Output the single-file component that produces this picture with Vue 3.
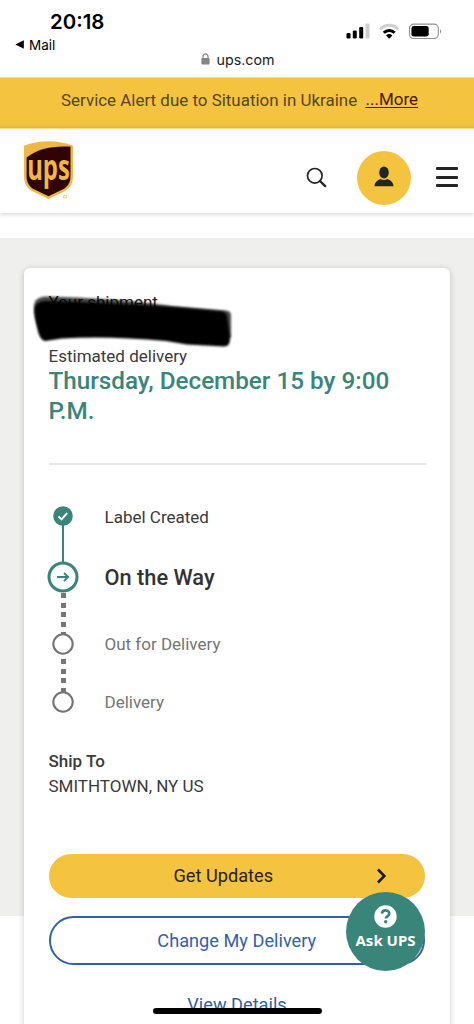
<script setup>
const steps = [
  { label: 'Label Created', state: 'done' },
  { label: 'On the Way', state: 'current' },
  { label: 'Out for Delivery', state: 'todo out' },
  { label: 'Delivery', state: 'todo last' },
]
</script>

<template>
  <div class="screen">
    <div class="status">
      <div class="clock">20:18</div>
      <div class="back">
        <svg width="10" height="10" viewBox="0 0 10 10"><path d="M0.3 4.5 8.8 .3v8.4z" /></svg>
        <span>Mail</span>
      </div>
      <div class="indicators">
        <svg width="98" height="20" viewBox="0 0 98 20">
          <rect x=".5" y="13" width="4" height="5.5" rx="1.2" />
          <rect x="6.8" y="10.5" width="4" height="8" rx="1.2" />
          <rect x="13.2" y="7" width="4" height="11.5" rx="1.2" />
          <rect x="19.5" y="3.500" width="4" height="15" rx="1.2" fill="#cfcfcf" />
          <path d="M34.200 9.2A12.2 12.2 0 0 1 52.2 9.2" fill="none" stroke="#cfcfcf" stroke-width="2.8" />
          <path d="M37.800 12.7A7.6 7.6 0 0 1 48.6 12.7" fill="none" stroke="#000" stroke-width="3" />
          <path d="M40 15.500A4.7 4.7 0 0 1 46.4 15.500L43.2 18.7z" />
          <rect x="63.500" y="4.100" width="28.8" height="14.4" rx="4.3" fill="#fff" stroke="#8f8f8f" stroke-width="1.1" />
          <rect x="65.400" y="6" width="17.3" height="10.6" rx="2.4" />
          <path d="M94 8.900Q96.6 11.300 94 13.700z" fill="#999" />
        </svg>
      </div>
      <div class="address">
        <svg width="9" height="12" viewBox="0 0 9 12">
          <rect x=".4" y="5" width="8.2" height="6.6" rx="1" fill="#858585" />
          <path d="M2 5.5V3.4a2.5 2.5 0 0 1 5 0v2.1" fill="none" stroke="#858585" stroke-width="1.2" />
        </svg>
        <span>ups.com</span>
      </div>
    </div>

    <div class="alert"><span class="msg">Service Alert due to Situation in Ukraine</span><a class="more">...More</a></div>

    <header class="top">
      <svg class="logo" width="50" height="60" viewBox="0 0 50 60">
        <path d="M0 4.8C14-1.4 35-1.4 49 4.8V35c0 8-3.5 12.5-9 15.6L24.5 58 9 50.6C3.500 47.500 0 43 0 35z" fill="#eeb843" />
        <path d="M2.600 16.500C13 8 28 4.400 46.500 5.600V35c0 6.500-2.500 10.400-7.500 13.300L24.500 55.200 10 48.300C5 45.400 2.600 41.500 2.600 35z" fill="#300406" />
        <text x="3.200" y="38.800" textLength="42.600" lengthAdjust="spacingAndGlyphs" class="wordmark">ups</text>
        <circle cx="41" cy="55.800" r="1.500" fill="none" stroke="#f2cd7b" stroke-width="1.100" />
      </svg>
      <svg class="search" width="22" height="22" viewBox="0 0 22 22">
        <circle cx="8.800" cy="8.800" r="7.300" fill="none" stroke="#242424" stroke-width="1.700" />
        <path d="M14 14l5.200 5.100" stroke="#242424" stroke-width="2.400" stroke-linecap="round" />
      </svg>
      <div class="avatar">
        <svg width="20" height="21" viewBox="0 0 20 21" fill="#242424">
          <ellipse cx="10" cy="6.500" rx="4.800" ry="6" />
          <path d="M.4 20.300C.8 16.500 3.500 14 6.600 13.100Q10 15 13.400 13.100C16.500 14 19.200 16.500 19.600 20.300z" />
        </svg>
      </div>
      <div class="burger"><i></i><i></i><i></i></div>
    </header>

    <main class="page">
      <section class="card">
        <div class="shipment">
          <span>Your shipment</span>
          <svg class="scribble" width="204" height="60" viewBox="0 0 204 60">
            <defs><filter id="soft" x="-5%" y="-10%" width="110%" height="120%"><feGaussianBlur stdDeviation="1.100" /></filter></defs>
            <path filter="url(#soft)" opacity=".72" d="M4 7Q8 3.500 14 3.500L45 4.500Q80 6 117 10L140 13 194 17.500Q199 18 199 22L199 45L10 40C4 31-1 14 4 7z" />
            <path filter="url(#soft)" d="M4 12Q8 8 14 8L45 9Q80 10 117 12.500L140 14 190 18.500Q194 19 195 23L198 46Q198 53.500 192 53.500L155 51.500 134 48Q75 42.500 30 45.500L13 48Q9 47 7 41.500C4 31 1 16 4 12z" />
          </svg>
        </div>
        <div class="label">Estimated delivery</div>
        <h1>Thursday, December 15 by 9:00 P.M.</h1>
        <hr />
        <ol class="steps">
          <li v-for="s in steps" :key="s.label" :class="s.state">
            <div class="marker">
              <svg v-if="s.state === 'done'" width="20" height="20" viewBox="0 0 20 20">
                <circle cx="10" cy="10" r="9.800" fill="#3a857a" />
                <path d="M5.500 10.300l3 3 5.700-6.300" fill="none" stroke="#fff" stroke-width="1.900" />
              </svg>
              <svg v-else-if="s.state === 'current'" width="32" height="32" viewBox="0 0 32 32">
                <circle cx="16" cy="16" r="14" fill="#fff" stroke="#3a857a" stroke-width="3" />
                <path d="M10 16H21M17 12l4.200 4-4.200 4" fill="none" stroke="#3a857a" stroke-width="1.900" />
              </svg>
              <svg v-else width="22" height="22" viewBox="0 0 22 22">
                <circle cx="11" cy="11" r="9.700" fill="#fff" stroke="#757575" stroke-width="2.100" />
              </svg>
            </div>
            <span class="name">{{ s.label }}</span>
          </li>
        </ol>
        <div class="ship-title">Ship To</div>
        <div class="ship-place">SMITHTOWN, NY US</div>
        <button class="primary">
          <span>Get Updates</span>
          <svg class="chevron" width="11" height="16" viewBox="0 0 11 16"><path d="M2 1.500 8.300 8 2 14.500" fill="none" stroke="#1c1a10" stroke-width="2.600" /></svg>
        </button>
        <button class="outline"><span>Change My Delivery</span></button>
        <a class="details">View Details</a>
      </section>
    </main>

    <div class="ask">
      <svg width="23" height="23" viewBox="0 0 23 23">
        <circle cx="11.500" cy="11.500" r="11.200" fill="#fff" />
        <path d="M7.900 8.700C8.200 6.300 9.800 5.400 11.500 5.400c2.100 0 3.800 1.300 3.800 3.200 0 2.700-3.500 2.700-3.500 5" fill="none" stroke="#3a857a" stroke-width="2.600" />
        <circle cx="11.700" cy="16.700" r="1.700" fill="#3a857a" />
      </svg>
      <span>Ask UPS</span>
    </div>
    <div class="home-bar"></div>
  </div>
</template>

<style>
html, body { margin: 0; background: #fff; overflow: hidden; }
</style>

<style scoped>
* { box-sizing: border-box; }
.screen {
  position: relative; width: 474px; height: 1024px; overflow: hidden;
  display: flex; flex-direction: column;
  background: #fff; color: #3a3a3a;
  font-family: Roboto, "Liberation Sans", sans-serif; font-size: 17px;
}
.status {
  position: relative; height: 78px; flex: none; padding-top: 10px;
  font-family: Inter, "Liberation Sans", sans-serif; color: #000;
  border-bottom: 1px solid #e0d9c4;
}
.clock { margin-left: 50px; height: 24px; line-height: 24px; font-size: 20.400px; font-weight: 600; }
.back { display: flex; align-items: center; margin: 2px 0 0 15px; height: 18px; font-size: 13.500px; gap: 4px; }
.indicators { position: absolute; left: 346px; top: 20px; }
.indicators svg { display: block; }
.address { display: flex; align-items: center; margin: -4px 0 0 200.500px; gap: 7px; height: 18px; font-size: 14.300px; color: #222; }
.alert { display: flex; flex: none; height: 51px; background: #f4c441; border-bottom: 1px solid #f5dd98; box-shadow: inset 0 -5px 4px -4px #dcae38; padding-left: 61px; line-height: 45px; }
.msg { color: #57451c; width: 304.500px; white-space: nowrap; font-size: 16.950px; }
.more { color: #4e1405; line-height: 43px; text-decoration: underline; text-underline-offset: 2px; text-decoration-thickness: 1px; }
.top { position: relative; z-index: 1; display: flex; flex: none; height: 84px; background: #fff; box-shadow: 0 2px 4px rgba(0,0,0,.13); padding-left: 24px; }
.logo { margin-top: 12px; overflow: visible; }
.wordmark { font: 700 36px "Open Sans", sans-serif; fill: #eeb843; }
.search { margin: 38px 0 0 231.500px; }
.avatar { width: 54px; height: 54px; margin: 22px 0 0 29px; border-radius: 50%; background: #f4c441; display: flex; justify-content: center; padding-top: 15px; }
.burger { width: 22px; margin: 38px 0 0 25.500px; display: flex; flex-direction: column; gap: 5.500px; }
.burger i { height: 3px; border-radius: 1px; background: #242424; flex: none; }
.page { flex: none; margin-top: 25px; padding: 30px 24px 0; height: 786px; background: linear-gradient(#efefee 678px, #fff 678px); }
.card { height: 800px; padding: 23px 24.500px 0; border-radius: 6px 6px 0 0; background: #fff; box-shadow: 0 1px 6px rgba(0,0,0,.2); }
.shipment { position: relative; height: 53px; line-height: 23px; color: #222; }
.scribble { position: absolute; left: -16.500px; top: 1.500px; }
.label { line-height: 24px; height: 22px; }
h1 { margin: 0; font-size: 24.250px; line-height: 30px; font-weight: 500; color: #3a857a; }
hr { margin: 37px 0 0; border: 0; height: 2px; background: #e9e9e9; }
.steps { list-style: none; margin: 32px 0 0; padding: 0; }
.steps li { position: relative; display: flex; align-items: center; height: 40px; }
.marker { position: relative; z-index: 1; width: 29px; display: flex; justify-content: center; flex: none; }
.marker svg { flex: none; display: block; }
.name { margin-left: 27px; }
.steps li::before { content: ""; position: absolute; left: 12px; }
.steps li.done::before { left: 13.500px; top: 28px; width: 2px; height: 40px; background: #3a857a; }
.done .marker { top: -1.500px; }
.steps .current { margin-top: 20px; }
.current .name { font-size: 21.800px; font-weight: 500; color: #333; }
.current .marker { top: -.500px; }
.steps li.current::before, .steps li.out::before { left: 12px; width: 5px; height: 42px; background: repeating-linear-gradient(#757575 0 5px, transparent 5px 9.700px); }
.steps li.current::before { top: 36px; }
.todo { color: #757575; }
.steps .out { margin-top: 27px; }
.steps li.out::before { top: 35px; }
.steps .last { margin-top: 18px; }
.ship-title { margin-top: 26.500px; line-height: 25px; font-weight: 500; }
.ship-place { line-height: 25px; }
button { position: relative; display: flex; width: 376.500px; justify-content: center; align-items: center; border: 0; padding: 0; font: 18.200px Roboto, sans-serif; border-radius: 25px; }
.primary { margin-top: 55.500px; height: 44px; background: #f4c441; color: #2b210b; padding: 0 27px 1px 0; }
.chevron { position: absolute; right: 38px; top: 13.500px; }
.outline { margin-top: 18px; height: 49px; background: #fff; border: 2.500px solid #3260aa; color: #3260aa; }
.details { display: block; margin-top: 27px; line-height: 25px; font-size: 18.200px; text-align: center; color: #3260aa; }
.ask { position: absolute; z-index: 2; left: 346px; top: 892px; width: 79px; height: 79px; border-radius: 50%; background: #3a857a; display: flex; flex-direction: column; align-items: center; padding-top: 13px; color: #fff; font: 700 15px/20px "Noto Sans", sans-serif; }
.ask span { margin-top: 2px; white-space: nowrap; }
.home-bar { position: absolute; z-index: 3; left: 153px; top: 1008px; width: 169px; height: 6px; border-radius: 3px; background: #000; }
</style>
